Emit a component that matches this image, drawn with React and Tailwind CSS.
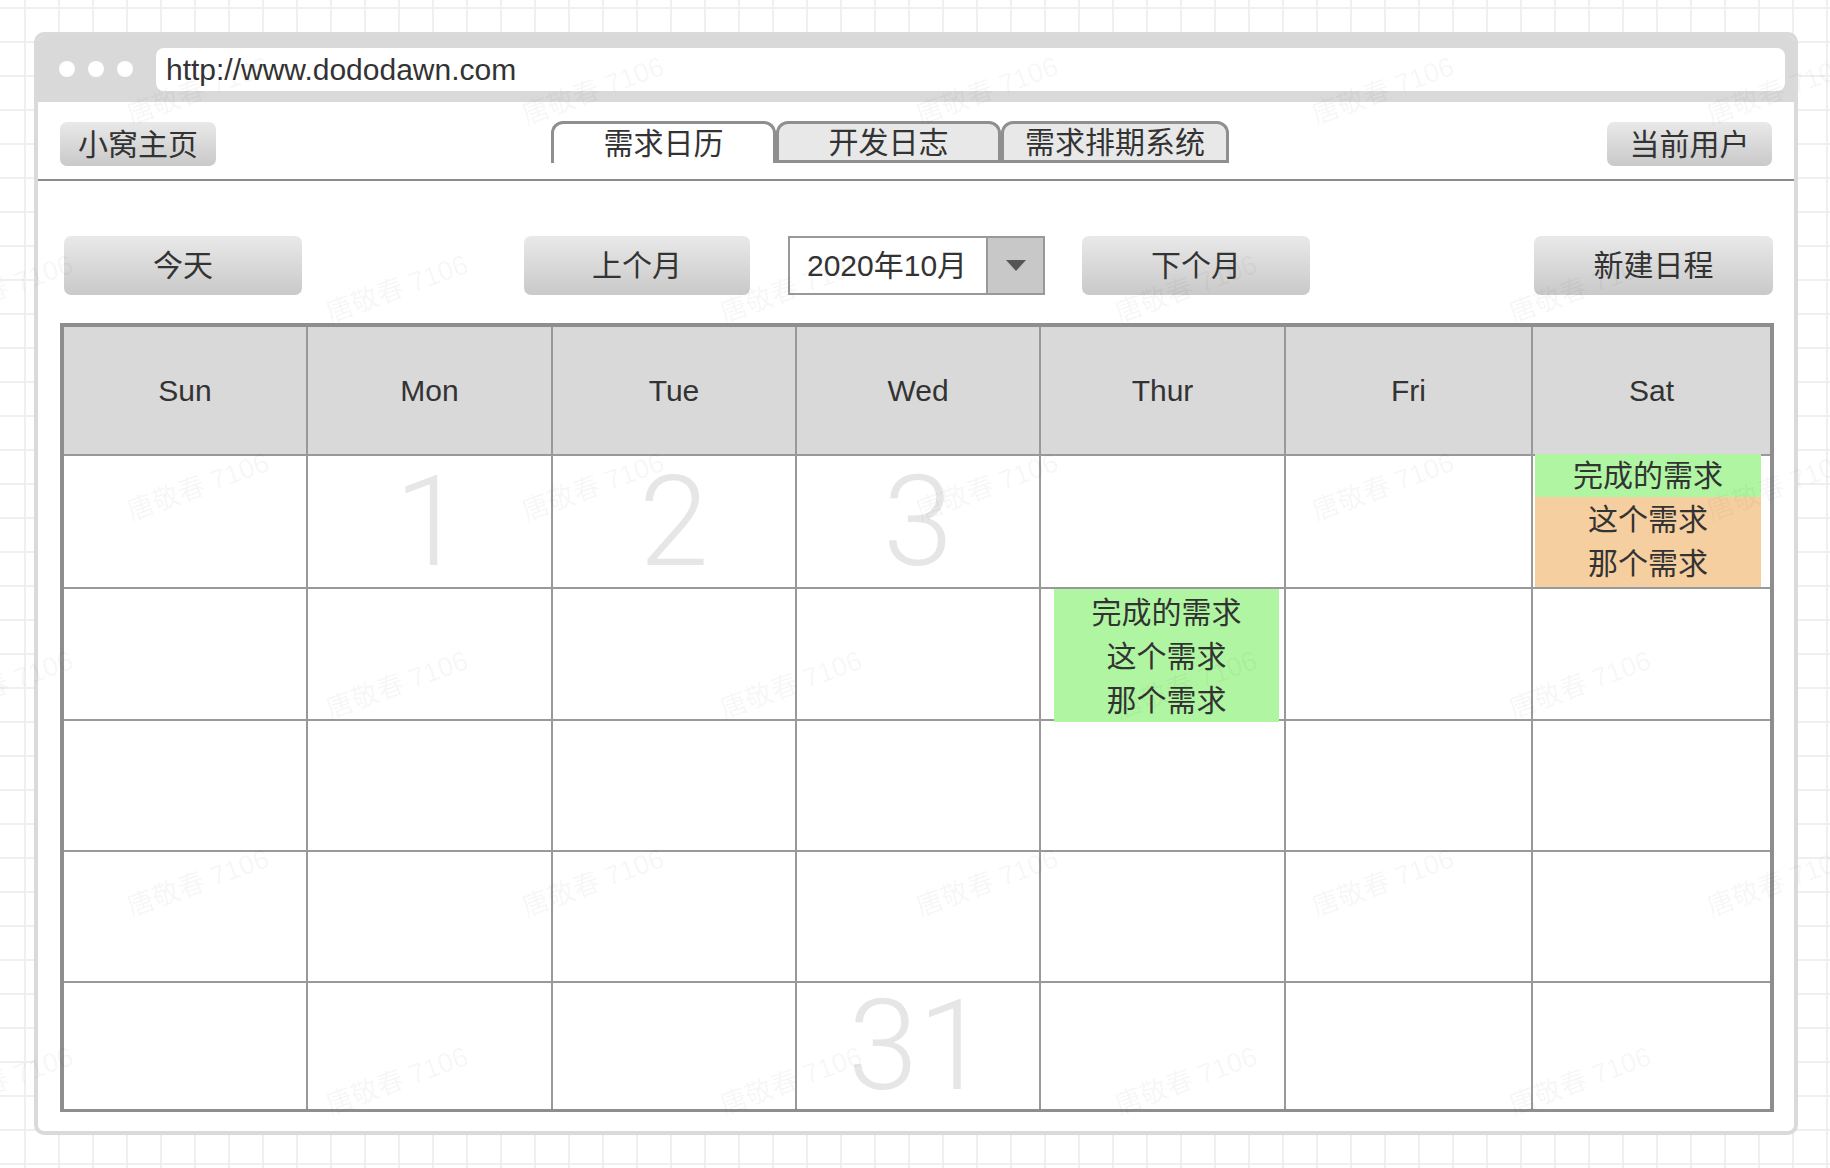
const DAYS = ["Sun", "Mon", "Tue", "Wed", "Thur", "Fri", "Sat"];

// watermark centres, staggered rows
const MARKS = [0, 1, 2, 3, 4, 5].flatMap((row) =>
  (row % 2 === 0 ? [198, 593, 987, 1383, 1778] : [2, 397, 791, 1186, 1580]).map((x) => ({
    x,
    y: 91 + row * 198,
  }))
);

const NUMBERS = { "0-1": "1", "0-2": "2", "0-3": "3", "4-3": "31" };

function GrayButton({ children, className = "" }) {
  return (
    <div
      className={
        "flex items-center justify-center rounded-[7px] bg-linear-to-b from-[#e9e9e9] to-[#c9c9c9] text-[30px] text-[#333] " +
        className
      }
    >
      {children}
    </div>
  );
}

function Cell({ row, col }) {
  const num = NUMBERS[`${row}-${col}`];
  if (row === 0 && col === 6) {
    return (
      <div className="bg-white">
        <div className="relative z-10 -mt-[2px] ml-[2px] w-[226px] text-center text-[30px] text-[#333]">
          <div className="h-[43px] bg-[#b0f6a2] leading-[43px]">完成的需求</div>
          <div className="bg-[#f6cfa0] py-[1px] leading-[44px]">
            <div>这个需求</div>
            <div>那个需求</div>
          </div>
        </div>
      </div>
    );
  }
  if (row === 1 && col === 4) {
    return (
      <div className="bg-white">
        <div className="relative z-10 ml-[13px] h-[133px] w-[225px] bg-[#b0f6a2] pt-[2px] text-center text-[30px] leading-[44px] text-[#333]">
          <div>完成的需求</div>
          <div>这个需求</div>
          <div>那个需求</div>
        </div>
      </div>
    );
  }
  return (
    <div className="flex items-center justify-center bg-white font-['Roboto','Liberation_Sans',sans-serif] text-[126px] font-light leading-none text-[#e6e6e6]">
      {num}
    </div>
  );
}

export default function App() {
  return (
    <div className="relative h-[1168px] w-[1830px] overflow-hidden bg-white bg-[linear-gradient(to_right,#efefef_2px,transparent_2px),linear-gradient(to_bottom,#efefef_2px,transparent_2px)] bg-[size:34px_34px] bg-[position:24px_7px] pt-[32px] font-['Liberation_Sans','Noto_Sans_CJK_SC',sans-serif]">
      <div className="ml-[34px] flex h-[1103px] w-[1764px] flex-col overflow-hidden rounded-[10px] border-4 border-[#dadada] bg-white">
        {/* title bar */}
        <div className="flex h-[66px] shrink-0 items-center bg-[#d9d9d9] pl-[21px] pr-[9px]">
          <div className="flex gap-[13px]">
            <span className="h-[16px] w-[16px] rounded-full bg-white" />
            <span className="h-[16px] w-[16px] rounded-full bg-white" />
            <span className="h-[16px] w-[16px] rounded-full bg-white" />
          </div>
          <div className="ml-[23px] flex h-[43px] flex-1 items-center rounded-[8px] bg-white pl-[10px] text-[30px] text-[#333]">
            http://www.dododawn.com
          </div>
        </div>

        {/* nav */}
        <div className="flex h-[77px] shrink-0 items-start px-[22px] pt-[20px]">
          <GrayButton className="h-[44px] w-[156px]">小窝主页</GrayButton>
          <div className="-mt-[1px] ml-[335px] flex h-[42px] text-[30px] text-[#333]">
            <div className="flex w-[225px] items-center justify-center rounded-t-[12px] border-x-3 border-t-3 border-[#8f8f8f] bg-white">
              需求日历
            </div>
            <div className="flex w-[225px] items-center justify-center rounded-t-[12px] border-3 border-[#8f8f8f] bg-[#e8e8e8]">
              开发日志
            </div>
            <div className="flex w-[228px] items-center justify-center rounded-t-[12px] border-3 border-[#8f8f8f] bg-[#e8e8e8]">
              需求排期系统
            </div>
          </div>
          <GrayButton className="ml-auto h-[44px] w-[165px]">当前用户</GrayButton>
        </div>
        <div className="h-[2px] shrink-0 bg-[#8c8c8c]" />

        {/* toolbar */}
        <div className="mt-[55px] flex h-[59px] shrink-0 pl-[26px] pr-[21px]">
          <GrayButton className="w-[238px]">今天</GrayButton>
          <GrayButton className="ml-[222px] w-[226px]">上个月</GrayButton>
          <div className="ml-[38px] flex w-[257px] border-2 border-[#999] bg-white text-[30px] text-[#333]">
            <div className="flex flex-1 items-center pl-[17px]">2020年10月</div>
            <div className="flex w-[57px] items-center justify-center border-l-2 border-[#999] bg-[#c8c8c8]">
              <svg width="20" height="11" viewBox="0 0 20 11">
                <polygon points="0,0 20,0 10,11" fill="#555" />
              </svg>
            </div>
          </div>
          <GrayButton className="ml-[37px] w-[228px]">下个月</GrayButton>
          <GrayButton className="ml-auto w-[239px]">新建日程</GrayButton>
        </div>

        {/* calendar */}
        <div className="ml-[22px] mr-[20px] mt-[28px] grid h-[789px] shrink-0 grid-cols-[242px_243px_242px_242px_243px_245px_1fr] grid-rows-[127px_131px_130px_129px_129px_1fr] gap-[2px] border-4 border-[#8e8e8e] bg-[#999]">
          {DAYS.map((d) => (
            <div key={d} className="flex items-center justify-center bg-[#d9d9d9] text-[30px] text-[#333]">
              {d}
            </div>
          ))}
          {[0, 1, 2, 3, 4].map((r) =>
            [0, 1, 2, 3, 4, 5, 6].map((c) => <Cell key={`${r}-${c}`} row={r} col={c} />)
          )}
        </div>
      </div>

      {/* watermark */}
      <div className="pointer-events-none absolute inset-0 z-20">
        {MARKS.map((m, i) => (
          <span
            key={i}
            className="absolute -translate-x-1/2 -translate-y-1/2 -rotate-[20deg] whitespace-nowrap text-[27px] text-black/[0.05]"
            style={{ left: m.x, top: m.y }}
          >
            唐敬春 7106
          </span>
        ))}
      </div>
    </div>
  );
}
